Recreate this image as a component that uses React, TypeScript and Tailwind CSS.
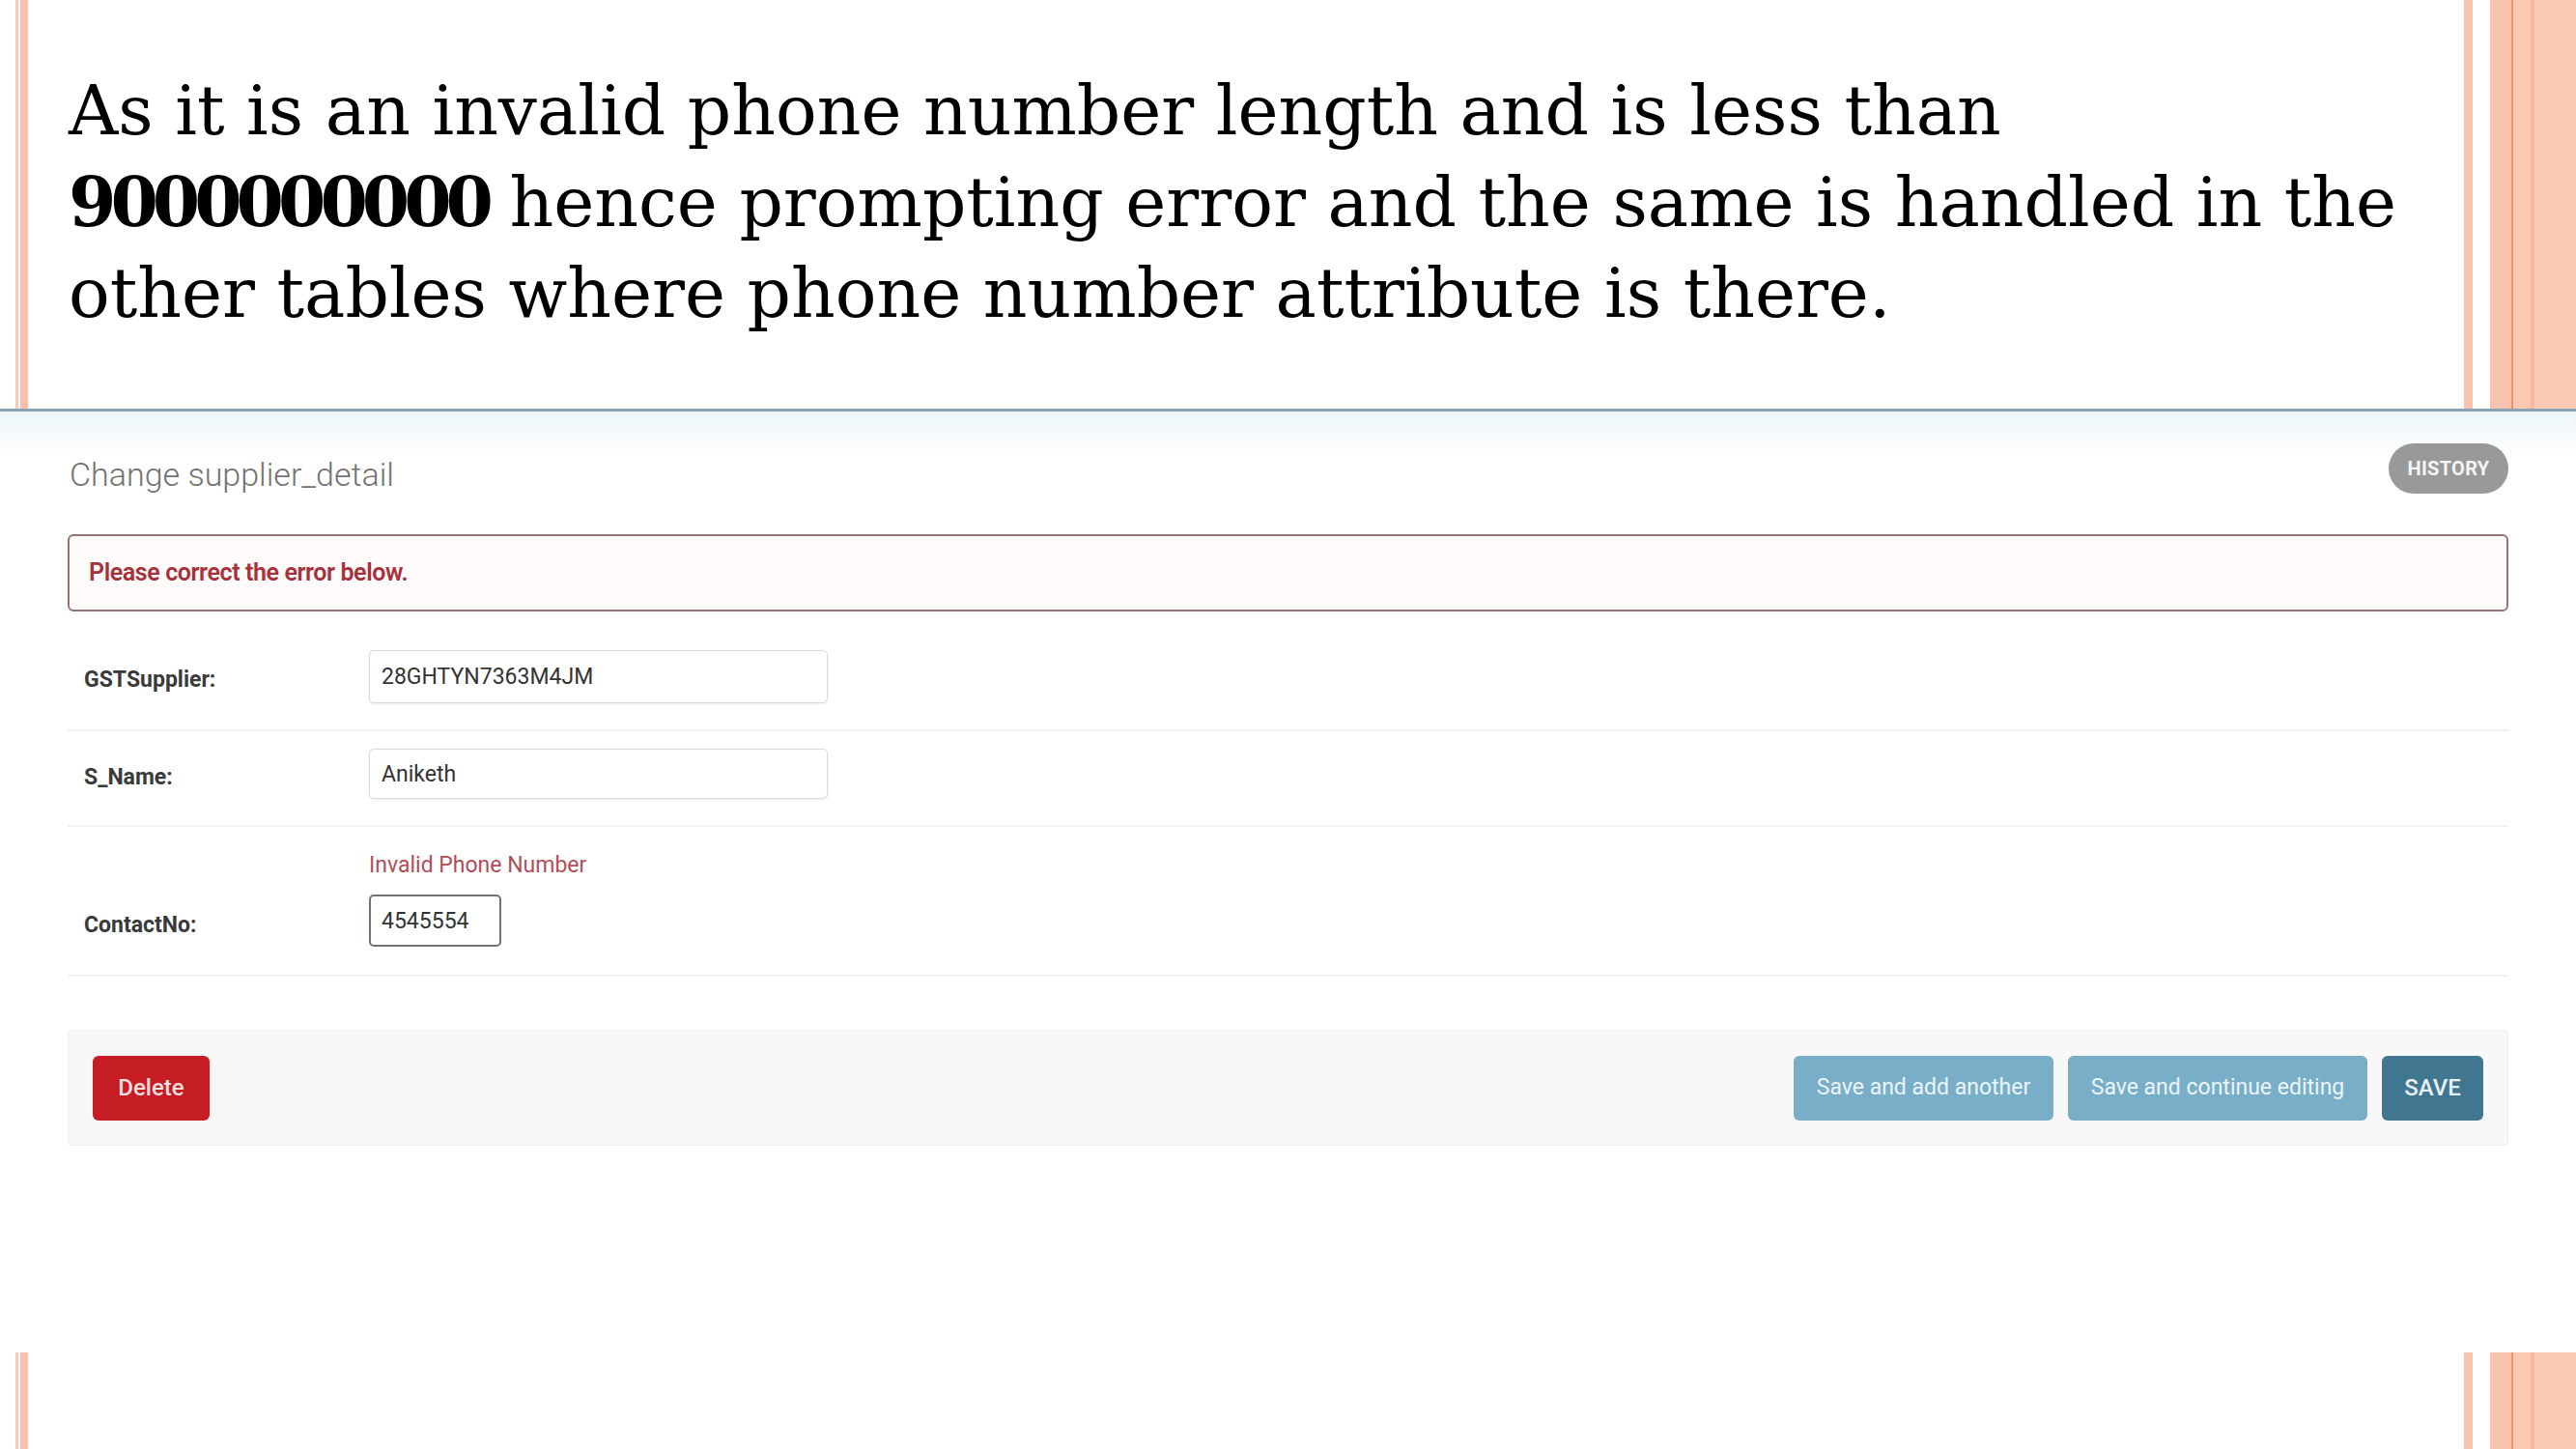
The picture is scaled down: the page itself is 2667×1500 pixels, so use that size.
import React from 'react';

function LeftStripes() {
  return (
    <div className="flex w-[29px] shrink-0 gap-[2px] pl-[16px]">
      <div className="w-[3px] bg-[#f6cbbb]" />
      <div className="w-[8px] bg-[#fbbea6]" />
    </div>
  );
}

function RightStripes() {
  return (
    <div className="flex w-[116px] shrink-0">
      <div className="w-[9px] bg-[#f9c2ac]" />
      <div className="w-[18px] bg-white" />
      <div className="flex flex-1 bg-[#fbc8b3]">
        <div className="w-[22px] bg-[#fac3ad]" />
        <div className="w-[2px] bg-[#f0935f]" />
        <div className="w-[18px]" />
        <div className="w-[4px] bg-[#f7b99f]" />
      </div>
    </div>
  );
}

interface FieldRowProps {
  label: string;
  value: string;
  spacing: string;
}

function FieldRow({ label, value, spacing }: FieldRowProps) {
  return (
    <div className={`flex items-center border-b-2 border-[#f1f1f1] pl-[17px] ${spacing}`}>
      <label className="w-[295px] pt-[8px] text-[23px] font-bold text-[#3a3a3a]">{label}</label>
      <input
        readOnly
        defaultValue={value}
        className="h-full w-[475px] rounded-[5px] border border-[#dadada] bg-white px-[12px] text-[23px] text-[#333] shadow-[0_1px_3px_rgba(0,0,0,0.08)] outline-none"
      />
    </div>
  );
}

export default function App() {
  return (
    <div className="flex h-[1500px] w-[2667px] flex-col overflow-hidden bg-white">
      {/* slide text */}
      <div className="flex h-[423px] shrink-0">
        <LeftStripes />
        <div className="flex-1 pl-[42px] pt-[68px] font-['DejaVu_Serif',serif] text-[71px] leading-[94px] text-black">
          As it is an invalid phone number length and is less than
          <br />
          <b className="tracking-[-6px]">9000000000</b> hence prompting error and the same is handled in the
          <br />
          other tables where phone number attribute is there.
        </div>
        <RightStripes />
      </div>

      {/* pasted admin screenshot */}
      <div className="h-[977px] shrink-0 border-t-[3px] border-[#8ba3b3] bg-linear-to-b from-[#eef6f9] to-white to-5% px-[70px] font-['Roboto',sans-serif]">
        <div className="flex items-start justify-between pt-[33px]">
          <h1 className="mt-[12px] pl-[2px] text-[34px] leading-[40px] font-light text-[#727272]">Change supplier_detail</h1>
          <span className="flex h-[52px] w-[124px] items-center justify-center rounded-full bg-[#999999] text-[20px] font-bold tracking-[0.3px] text-[#f4f4f4]">
            HISTORY
          </span>
        </div>

        <div className="mt-[42px] flex h-[80px] items-center rounded-[6px] border-2 border-[#967474] bg-[#fffbfb] pl-[20px] text-[25px] font-semibold tracking-[-0.4px] text-[#a8303a]">
          Please correct the error below.
        </div>

        <div className="h-[124px]">
          <FieldRow label="GSTSupplier:" value="28GHTYN7363M4JM" spacing="h-full pt-[40px] pb-[27px]" />
        </div>
        <div className="h-[99px]">
          <FieldRow label="S_Name:" value="Aniketh" spacing="h-full pt-[18px] pb-[27px]" />
        </div>

        <div className="flex items-end border-b-2 border-[#f1f1f1] pb-[29px] pl-[17px] pt-[26px]">
          <label className="flex h-[54px] w-[295px] items-center pt-[10px] text-[23px] font-bold text-[#3a3a3a]">ContactNo:</label>
          <div className="flex flex-col">
            <span className="text-[23px] leading-[28px] text-[#b24d57]">Invalid Phone Number</span>
            <input
              readOnly
              defaultValue="4545554"
              className="mt-[16px] h-[54px] w-[137px] rounded-[5px] border-2 border-[#767070] bg-white px-[11px] text-[23px] text-[#333] outline-none"
            />
          </div>
        </div>

        <div className="mt-[55px] flex h-[120px] items-center justify-between rounded-[4px] border border-[#eeeeee] bg-[#f8f8f8] px-[25px]">
          <button type="button" className="flex h-[67px] w-[121px] items-center justify-center rounded-[6px] bg-[#c51d23] text-[24px] font-medium text-[#f8dede]">
            Delete
          </button>
          <div className="flex gap-[15px]">
            <button type="button" className="flex h-[67px] w-[269px] items-center justify-center rounded-[6px] bg-[#79aec8] text-[23px] text-[#eaf5fa]">
              Save and add another
            </button>
            <button type="button" className="flex h-[67px] w-[310px] items-center justify-center rounded-[6px] bg-[#79aec8] text-[23px] text-[#eaf5fa]">
              Save and continue editing
            </button>
            <button type="button" className="flex h-[67px] w-[105px] items-center justify-center rounded-[6px] bg-[#417690] text-[24px] font-medium text-[#e6f1f6]">
              SAVE
            </button>
          </div>
        </div>
      </div>

      {/* slide bottom edge */}
      <div className="flex flex-1">
        <LeftStripes />
        <div className="flex-1" />
        <RightStripes />
      </div>
    </div>
  );
}
